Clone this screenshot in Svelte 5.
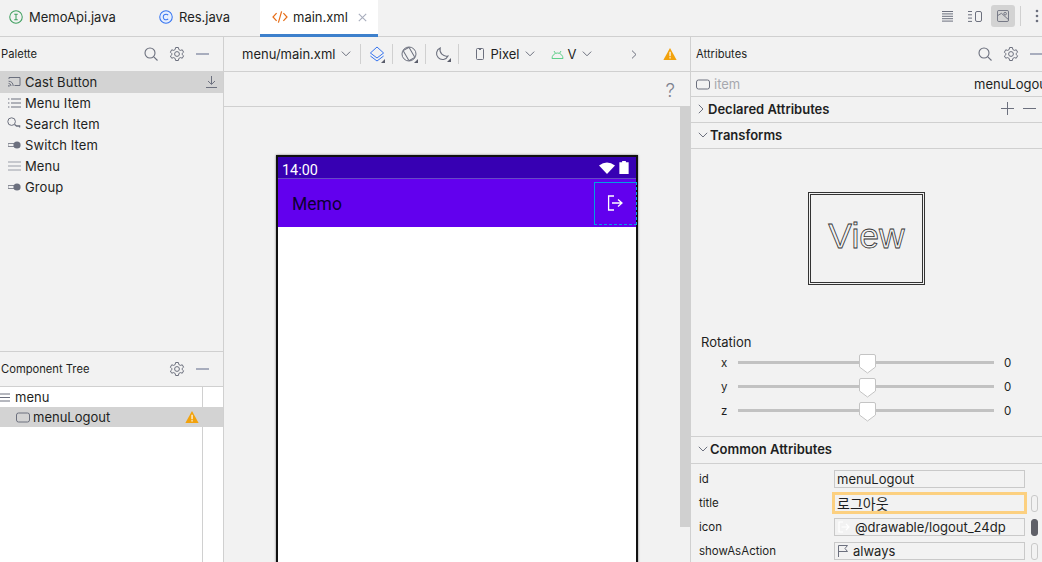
<script>
	const palette = [
		{ name: 'Cast Button', icon: 'cast', sel: true },
		{ name: 'Menu Item', icon: 'list' },
		{ name: 'Search Item', icon: 'search' },
		{ name: 'Switch Item', icon: 'switch' },
		{ name: 'Menu', icon: 'menu' },
		{ name: 'Group', icon: 'switch' }
	];
	const axes = ['x', 'y', 'z'];
</script>

{#snippet gear()}
	<svg class="ico" width="16" height="16" viewBox="0 0 16 16" fill="none" stroke="#6c707e">
		<path d="M6.6 1.5h2.8l.4 2 1.5.9 2-.6 1.3 2.4-1.5 1.3v1l1.5 1.3-1.3 2.4-2-.6-1.5.9-.4 2H6.6l-.4-2-1.5-.9-2 .6L1.4 10l1.5-1.3v-1L1.4 6.2l1.3-2.4 2 .6 1.5-.9z" />
		<circle cx="8" cy="8" r="2.4" />
	</svg>
{/snippet}
{#snippet magnifier()}
	<svg class="ico" width="16" height="16" viewBox="0 0 16 16" fill="none" stroke="#6c707e" stroke-width="1.1">
		<circle cx="7" cy="7" r="5" /><path d="M10.8 10.8l3.7 3.7" />
	</svg>
{/snippet}
{#snippet dash()}
	<span class="dash"></span>
{/snippet}
{#snippet chev()}
	<svg class="chev" width="10" height="6" viewBox="0 0 10 6" fill="none" stroke="#6c707e"><path d="M.8.6L5 4.8 9.2.6" /></svg>
{/snippet}
{#snippet warn(size = 15)}
	<svg width={size} height={size} viewBox="0 0 15 14"><path d="M7.5 0.5L14.6 13.5H.4z" fill="#f2a20c" /><rect x="6.9" y="4.6" width="1.3" height="4.8" fill="#fff" /><rect x="6.9" y="10.4" width="1.3" height="1.4" fill="#fff" /></svg>
{/snippet}
{#snippet corner()}
	<span class="corner"></span>
{/snippet}
{#snippet itemBox()}
	<svg width="14" height="11" viewBox="0 0 14 11" fill="none" stroke="#6c707e"><rect x=".5" y="1" width="13" height="9" rx="2" /></svg>
{/snippet}

<div class="app">
	<header class="tabs">
		<div class="tab t1">
			<svg width="14" height="14" viewBox="0 0 15 15" fill="none"><circle cx="7.5" cy="7.5" r="6.7" stroke="#3f9f5f" stroke-width="1.1" /><path d="M5.6 4.5h3.8M5.6 10.5h3.8M7.5 4.5v6" stroke="#3f9f5f" stroke-width="1.1" /></svg>
			<span>MemoApi.java</span>
		</div>
		<div class="tab t2">
			<svg width="14" height="14" viewBox="0 0 15 15" fill="none"><circle cx="7.5" cy="7.5" r="6.7" fill="#e7effd" stroke="#3574f0" stroke-width="1.1" /><path d="M9.8 5.5a3 3 0 1 0 0 4" stroke="#3574f0" stroke-width="1.1" /></svg>
			<span>Res.java</span>
		</div>
		<div class="tab active">
			<svg width="16" height="14" viewBox="0 0 16 14" fill="none" stroke="#e66d17" stroke-width="1.2"><path d="M4.6 3.2L1 7l3.6 3.8M11.4 3.2L15 7l-3.6 3.8M9.6 1.4L6.4 12.6" /></svg>
			<span>main.xml</span>
			<svg class="close" width="9" height="9" viewBox="0 0 9 9" stroke="#a8adbd" stroke-width="1.1"><path d="M.8.8l7.4 7.4M8.2.8L.8 8.2" /></svg>
		</div>
		<div class="mode">
			<svg class="m1" width="11" height="11" viewBox="0 0 11 11" stroke="#6c707e"><path d="M0 .5h11M0 2.9h11M0 5.3h11M0 7.7h11M0 10.1h11" /></svg>
			<svg class="m2" width="14" height="11" viewBox="0 0 14 11" fill="none" stroke="#6c707e"><path d="M0 .5h4M0 3.8h4M0 7.1h4M0 10.4h4" /><rect x="7.5" y=".5" width="6" height="10" rx="1.5" /></svg>
			<span class="mode-on">
				<svg width="12" height="12" viewBox="0 0 13 13" fill="none" stroke="#6c707e"><rect x=".5" y=".5" width="12" height="12" rx="1.5" /><circle cx="8.8" cy="4" r="1.4" /><path d="M.8 6l4-2.4 7.4 6.6" /></svg>
			</span>
			<span class="vsep"></span>
			<svg width="4" height="14" viewBox="0 0 4 14" fill="#6c707e"><circle cx="2" cy="2" r="1.3" /><circle cx="2" cy="7" r="1.3" /><circle cx="2" cy="12" r="1.3" /></svg>
		</div>
	</header>

	<div class="body">
		<aside class="left">
			<div class="phead">
				<span class="ptitle">Palette</span>
				<span class="pacts">{@render magnifier()}{@render gear()}{@render dash()}</span>
			</div>
			<ul class="plist">
				{#each palette as p}
					<li class:sel={p.sel}>
						<span class="picon">
							{#if p.icon === 'cast'}
								<svg width="13" height="11" viewBox="0 0 13 11" fill="none" stroke="#6c707e"><path d="M1 3V1.5h11v8H6.5M.6 5.2a5 5 0 0 1 4.6 4.8M.6 7.4A2.6 2.6 0 0 1 3 10" /><circle cx=".9" cy="9.9" r=".8" fill="#6c707e" stroke="none" /></svg>
							{:else if p.icon === 'list'}
								<svg width="13" height="10" viewBox="0 0 13 10" stroke="#6c707e"><path d="M3 1h10M3 5h10M3 9h10M0 1h1.4M0 5h1.4M0 9h1.4" /></svg>
							{:else if p.icon === 'search'}
								<svg class="up" width="14" height="12" viewBox="0 0 14 12" fill="none" stroke="#6c707e"><circle cx="4.6" cy="4.6" r="3.8" /><path d="M7.6 7.4l2 1.6h3v1.6" stroke-width="1.3" /></svg>
							{:else if p.icon === 'switch'}
								<svg width="13" height="8" viewBox="0 0 13 8"><rect x="0" y="2.6" width="8" height="2.8" fill="none" stroke="#6c707e" stroke-width=".8" /><circle cx="9" cy="4" r="3.6" fill="#6c707e" /></svg>
							{:else}
								<svg width="13" height="10" viewBox="0 0 13 10" stroke="#9a9da8" stroke-width="1.2"><path d="M0 1h13M0 5h13M0 9h13" /></svg>
							{/if}
						</span>
						<span>{p.name}</span>
						{#if p.sel}
							<svg class="dl" width="11" height="12" viewBox="0 0 11 12" fill="none" stroke="#6c707e"><path d="M5.5 0v8M2 5l3.5 3.4L9 5M0 11.5h11" /></svg>
						{/if}
					</li>
				{/each}
			</ul>
			<div class="thead">
				<span class="ptitle">Component Tree</span>
				<span class="pacts">{@render gear()}{@render dash()}</span>
			</div>
			<div class="tree">
				<div class="trow">
					<svg width="10" height="9" viewBox="0 0 10 9" stroke="#6c707e"><path d="M0 1h10M0 4.5h10M0 8h10" /></svg>
					<span>menu</span>
				</div>
				<div class="trow child">
					{@render itemBox()}
					<span>menuLogout</span>
					<span class="twarn">{@render warn(14)}</span>
				</div>
			</div>
		</aside>

		<main class="center">
			<div class="tools">
				<span class="file">menu/main.xml</span>{@render chev()}
				<span class="vsep s1"></span>
				<span class="tool">
					<svg width="16" height="16" viewBox="0 0 16 16" fill="none" stroke="#3574f0"><path d="M8 1l6.6 6L8 12 1.4 7zM1.4 10L8 15l6.6-5" /></svg>
					{@render corner()}
				</span>
				<span class="vsep"></span>
				<span class="tool wide">
					<svg width="16" height="16" viewBox="0 0 16 16" fill="none" stroke="#6c707e"><circle cx="8" cy="8" r="7" /><rect x="4.6" y="2.2" width="6.8" height="11.6" rx="1" transform="rotate(-30 8 8)" /></svg>
					{@render corner()}
				</span>
				<span class="vsep"></span>
				<span class="tool wide">
					<svg width="14" height="14" viewBox="0 0 14 14" fill="none" stroke="#6c707e" stroke-width="1.1"><path d="M5.2 1A6 6 0 1 0 13 9 6.5 6.5 0 0 1 5.2 1z" /></svg>
					{@render corner()}
				</span>
				<span class="vsep"></span>
				<svg class="phone" width="8" height="12" viewBox="0 0 8 12" fill="none" stroke="#6c707e"><rect x=".5" y=".5" width="7" height="11" rx="1" /><path d="M3 1.5h2" /></svg>
				<span class="file pix">Pixel</span>{@render chev()}
				<svg class="droid" width="13" height="9" viewBox="0 0 13 9" fill="none" stroke="#5fcf8a"><path d="M1 8.5a5.5 5.5 0 0 1 11 0zM3 1l1.4 2.2M10 1L8.6 3.2" /></svg>
				<span class="file ver">V</span>{@render chev()}
				<svg class="more" width="6" height="9" viewBox="0 0 6 9" fill="none" stroke="#6c707e"><path d="M1 .6l4 3.9-4 3.9" /></svg>
				<span class="twarn2">{@render warn(14)}</span>
			</div>
			<div class="subtools"><span class="help">?</span></div>
			<div class="canvas">
				<div class="stage">
					<div class="device">
						<div class="status">
							<span class="clock">14:00</span>
							<svg width="16" height="12" viewBox="0 0 16 12" fill="#fff"><path d="M0 3.4Q8-2.6 16 3.4L8 12z" /></svg>
							<svg width="10" height="13" viewBox="0 0 10 14" fill="#fff"><path d="M3 0h4v1.4h3V14H0V1.4h3z" /></svg>
						</div>
						<div class="appbar">
							<span class="memo">Memo</span>
							<div class="action">
								<svg width="16" height="16" viewBox="0 0 16 16" fill="none" stroke="#fff" stroke-width="1.3"><path d="M7 1H1.6v14H7M5 8h10M11 4.4L15 8l-4 3.6" /></svg>
							</div>
						</div>
						<div class="screen"></div>
					</div>
				</div>
				<div class="scroll"><div class="thumb"></div></div>
			</div>
		</main>

		<aside class="right">
			<div class="phead rhead">
				<span class="ptitle">Attributes</span>
				<span class="pacts">{@render magnifier()}{@render gear()}{@render dash()}</span>
			</div>
			<div class="item">
				{@render itemBox()}
				<span class="grey">item</span>
				<span class="itemid">menuLogout</span>
			</div>
			<div class="sec">
				<svg width="6" height="10" viewBox="0 0 6 10" fill="none" stroke="#6c707e"><path d="M.8.8L5 5 .8 9.2" /></svg>
				<b>Declared Attributes</b>
				<span class="secacts">
					<svg width="13" height="13" viewBox="0 0 13 13" stroke="#6c707e"><path d="M6.5 0v13M0 6.5h13" /></svg>
					<svg width="13" height="13" viewBox="0 0 13 13" stroke="#6c707e"><path d="M0 6.5h13" /></svg>
				</span>
			</div>
			<div class="sec">
				<svg class="dn" width="10" height="6" viewBox="0 0 10 6" fill="none" stroke="#6c707e"><path d="M.8.8L5 5 9.2.8" /></svg>
				<b>Transforms</b>
			</div>
			<div class="transforms">
				<div class="view"><span>View</span></div>
				<div class="rot">Rotation</div>
				{#each axes as a}
					<div class="axis">
						<span class="alabel">{a}</span>
						<div class="track">
							<svg class="knob" width="17" height="20" viewBox="0 0 17 20"><path d="M2 .5h13a1.5 1.5 0 0 1 1.5 1.5v11L8.5 19 .5 13V2A1.5 1.5 0 0 1 2 .5z" fill="#fff" stroke="#c4c4c4" /></svg>
						</div>
						<span class="aval">0</span>
					</div>
				{/each}
			</div>
			<div class="sec common">
				<svg class="dn" width="10" height="6" viewBox="0 0 10 6" fill="none" stroke="#6c707e"><path d="M.8.8L5 5 9.2.8" /></svg>
				<b>Common Attributes</b>
			</div>
			<div class="attrs">
				<div class="attr"><span class="lab">id</span><div class="field">menuLogout</div></div>
				<div class="attr"><span class="lab">title</span><div class="field focus">로그아웃</div><span class="pill"></span></div>
				<div class="attr">
					<span class="lab">icon</span>
					<div class="field ic">
						<svg width="12" height="12" viewBox="0 0 12 12" fill="none" stroke="#fff" stroke-width="1.2"><path d="M5 1H1v10h4M3.5 6H11M8 3l3 3-3 3" /></svg>
						<span>@drawable/logout_24dp</span>
					</div>
					<span class="pill dark"></span>
				</div>
				<div class="attr">
					<span class="lab">showAsAction</span>
					<div class="field ic">
						<svg width="10" height="12" viewBox="0 0 10 12" fill="none" stroke="#6c707e"><path d="M.5 12V.5h9L7 3.5l2.5 3H.5" /></svg>
						<span>always</span>
					</div>
					<span class="pill"></span>
				</div>
			</div>
		</aside>
	</div>
</div>

<style>
	:global(body) {
		margin: 0;
		overflow: hidden;
	}
	.app {
		width: 1042px;
		height: 562px;
		display: flex;
		flex-direction: column;
		overflow: hidden;
		background: #f2f2f2;
		color: #1e1f22;
		font: 13px Inter, "Noto Sans CJK KR", sans-serif;
	}
	svg {
		flex: none;
		display: block;
	}
	.tabs {
		height: 36px;
		flex: none;
		display: flex;
		border-bottom: 1px solid #d0d0d0;
	}
	.tab {
		display: flex;
		align-items: center;
		gap: 6px;
		font-size: 13px;
		padding-bottom: 2px;
		box-sizing: border-box;
	}
	.t1 {
		width: 159px;
		padding-left: 9px;
	}
	.t2 {
		width: 101px;
	}
	.active {
		width: 118px;
		padding: 0 0 0 12px;
		background: #fff;
		height: 37px;
		margin-bottom: -1px;
		border-bottom: 3px solid #3d80cc;
		gap: 5px;
	}
	.close {
		margin-left: 5px;
	}
	.mode {
		margin-left: auto;
		display: flex;
		align-items: center;
		padding: 0 3px 4px 0;
	}
	.m1 {
		margin-right: 15px;
	}
	.m2 {
		margin-right: 9px;
	}
	.mode-on {
		width: 24px;
		height: 22px;
		border-radius: 3px;
		background: #d3d3d3;
		display: flex;
		align-items: center;
		justify-content: center;
	}
	.mode .vsep {
		margin: 0 14px 0 5px;
	}
	.vsep {
		width: 1px;
		height: 20px;
		background: #d0d0d0;
		flex: none;
	}
	.body {
		flex: 1;
		display: flex;
		min-height: 0;
	}
	.left {
		width: 223px;
		flex: none;
		border-right: 1px solid #d0d0d0;
		display: flex;
		flex-direction: column;
	}
	.phead {
		height: 34px;
		flex: none;
		display: flex;
		align-items: center;
		padding-left: 1px;
	}
	.ptitle {
		font-size: 11.2px;
	}
	.pacts {
		margin-left: auto;
		display: flex;
		align-items: center;
		gap: 10px;
		padding-right: 14px;
	}
	.dash {
		width: 13px;
		height: 1.5px;
		margin-left: 1px;
		background: #a8adbd;
	}
	.plist {
		list-style: none;
		margin: 0;
		padding: 0;
		height: 280px;
		flex: none;
	}
	.plist li {
		height: 21px;
		box-sizing: border-box;
		padding-bottom: 1px;
		display: flex;
		align-items: center;
		position: relative;
		letter-spacing: 0.1px;
	}
	.plist li.sel {
		background: #d3d3d3;
		height: 22px;
	}
	.picon {
		width: 25px;
		padding-left: 8px;
		box-sizing: border-box;
		flex: none;
	}
	.picon .up {
		margin: -3px 0 0 -1px;
	}
	.dl {
		margin-left: auto;
		margin-right: 6px;
	}
	.thead {
		height: 36px;
		flex: none;
		display: flex;
		align-items: center;
		padding-left: 1px;
		border-top: 1px solid #d0d0d0;
		border-bottom: 1px solid #d0d0d0;
		box-sizing: border-box;
	}
	.tree {
		flex: 1;
		background: linear-gradient(to right, #fff 202px, #d0d0d0 202px, #d0d0d0 203px, #fff 203px);
	}
	.trow {
		height: 20px;
		display: flex;
		align-items: center;
		gap: 5px;
	}
	.child {
		background: #d3d3d3;
		padding-left: 16px;
		gap: 3px;
	}
	.twarn {
		margin-left: auto;
		margin-right: 24px;
	}
	.center {
		flex: 1;
		min-width: 0;
		display: flex;
		flex-direction: column;
	}
	.tools {
		height: 35px;
		flex: none;
		box-sizing: border-box;
		display: flex;
		align-items: center;
		padding-left: 18px;
		border-bottom: 1px solid #d0d0d0;
	}
	.file {
		margin-right: 6px;
	}
	.s1 {
		margin-left: 9px;
	}
	.tool {
		position: relative;
		width: 31px;
		display: flex;
		justify-content: center;
	}
	.wide {
		width: 32px;
	}
	.corner {
		position: absolute;
		right: 7px;
		bottom: -1px;
		width: 0;
		height: 0;
		border-left: 4px solid transparent;
		border-bottom: 4px solid #5a5d6b;
	}
	.phone {
		margin-left: 17px;
	}
	.pix {
		margin-left: 6px;
		margin-right: 6px;
	}
	.droid {
		margin-left: 16px;
	}
	.ver {
		margin-left: 3px;
		margin-right: 6px;
	}
	.more {
		margin-left: 39px;
	}
	.twarn2 {
		margin-left: 26px;
	}
	.subtools {
		height: 35px;
		flex: none;
		box-sizing: border-box;
		border-bottom: 1px solid #d0d0d0;
		display: flex;
		justify-content: flex-end;
		align-items: center;
		padding-right: 15px;
	}
	.help {
		font-size: 19px;
		font-weight: 300;
		color: #7f8290;
		margin-top: 2px;
	}
	.canvas {
		flex: 1;
		display: flex;
		min-height: 0;
		background: #f2f2f2;
	}
	.stage {
		flex: 1;
		padding: 48px 0 0 52px;
		overflow: hidden;
	}
	.scroll {
		width: 10px;
		flex: none;
	}
	.thumb {
		height: 420px;
		background: #d0d0d0;
	}
	.device {
		width: 358px;
		height: 420px;
		border: 2px solid #111;
		border-bottom: 0;
		box-shadow: 0 0 2px #777;
		display: flex;
		flex-direction: column;
		background: #fff;
	}
	.status {
		height: 21px;
		flex: none;
		display: flex;
		align-items: center;
		gap: 4px;
		padding: 0 7px 0 4px;
		background: #3700b3;
		border-bottom: 1px solid #6a4bc8;
		color: #fff;
		font: 14.4px Roboto, sans-serif;
	}
	.clock {
		margin-right: auto;
		margin-top: 6px;
	}
	.appbar {
		height: 48px;
		flex: none;
		background: #6200ee;
		display: flex;
		align-items: center;
		justify-content: space-between;
		box-shadow: 0 1px 2px rgba(0, 0, 0, 0.25);
	}
	.memo {
		margin: 1px 0 0 14px;
		font: 17.5px Roboto, sans-serif;
		color: #0c0030;
	}
	.action {
		width: 43px;
		height: 43px;
		margin-right: -1px;
		padding-right: 2px;
		border: 1px solid #00a2e0;
		border-style: solid dashed dashed solid;
		box-sizing: border-box;
		display: flex;
		align-items: center;
		justify-content: center;
	}
	.screen {
		flex: 1;
		background: #fff;
	}
	.right {
		width: 351px;
		flex: none;
		border-left: 1px solid #d0d0d0;
		display: flex;
		flex-direction: column;
		overflow: hidden;
	}
	.rhead {
		height: 35px;
		padding-left: 5px;
		border-bottom: 1px solid #d0d0d0;
		box-sizing: border-box;
	}
	.rhead .pacts {
		padding-right: 0;
		margin-right: -1px;
	}
	.item {
		height: 25px;
		flex: none;
		box-sizing: border-box;
		border-bottom: 1px solid #d0d0d0;
		display: flex;
		align-items: center;
		padding-left: 5px;
		gap: 4px;
		white-space: nowrap;
	}
	.grey {
		width: 256px;
		flex: none;
		color: #a6a8ae;
	}
	.itemid {
		flex: none;
	}
	.sec {
		height: 26px;
		flex: none;
		box-sizing: border-box;
		border-bottom: 1px solid #d0d0d0;
		display: flex;
		align-items: center;
		padding: 0 0 2px 7px;
		gap: 4px;
	}
	.sec b {
		font-weight: 600;
	}
	.sec .dn {
		margin-right: -2px;
	}
	.secacts {
		margin-left: auto;
		display: flex;
		gap: 9px;
		padding-right: 6px;
	}
	.transforms {
		height: 288px;
		flex: none;
		box-sizing: border-box;
		border-bottom: 1px solid #d0d0d0;
		padding-top: 43px;
	}
	.view {
		width: 117px;
		height: 93px;
		margin-left: 117px;
		box-sizing: border-box;
		border: 3px double #333;
		display: flex;
		align-items: center;
		justify-content: center;
	}
	.view span {
		font: 35.5px "Liberation Sans", Arial, sans-serif;
		color: #f2f2f2;
		-webkit-text-stroke: 0.8px #333;
		margin-top: -4px;
	}
	.rot {
		margin: 49px 0 0 10px;
		height: 16px;
	}
	.axis {
		height: 24px;
		display: flex;
		align-items: center;
		font-size: 11.5px;
	}
	.alabel {
		width: 47px;
		padding: 1px 0 0 30px;
		box-sizing: border-box;
		flex: none;
	}
	.track {
		width: 256px;
		height: 3px;
		background: #c2c2c2;
		position: relative;
		flex: none;
	}
	.knob {
		position: absolute;
		left: 121px;
		top: -7px;
	}
	.aval {
		margin: 1px 0 0 10px;
	}
	.common {
		height: 27px;
	}
	.attrs {
		padding-top: 3px;
	}
	.attr {
		height: 24px;
		display: flex;
		align-items: center;
	}
	.lab {
		width: 143px;
		padding-left: 8px;
		box-sizing: border-box;
		font-size: 11.5px;
		flex: none;
	}
	.field {
		width: 191px;
		height: 18px;
		flex: none;
		box-sizing: border-box;
		border: 1px solid #c9c9c9;
		padding-left: 2px;
		display: flex;
		align-items: center;
		gap: 5px;
		white-space: nowrap;
	}
	.focus {
		outline: 2px solid #fcd080;
		border-color: #fcd080;
		font-size: 14px;
	}
	.ic {
		padding-left: 3px;
	}
	.pill {
		width: 5px;
		height: 15px;
		border: 1px solid #c9c9c9;
		border-radius: 3px;
		margin-left: 6px;
		flex: none;
	}
	.pill.dark {
		background: #5f6068;
		border-color: #5f6068;
	}
</style>
